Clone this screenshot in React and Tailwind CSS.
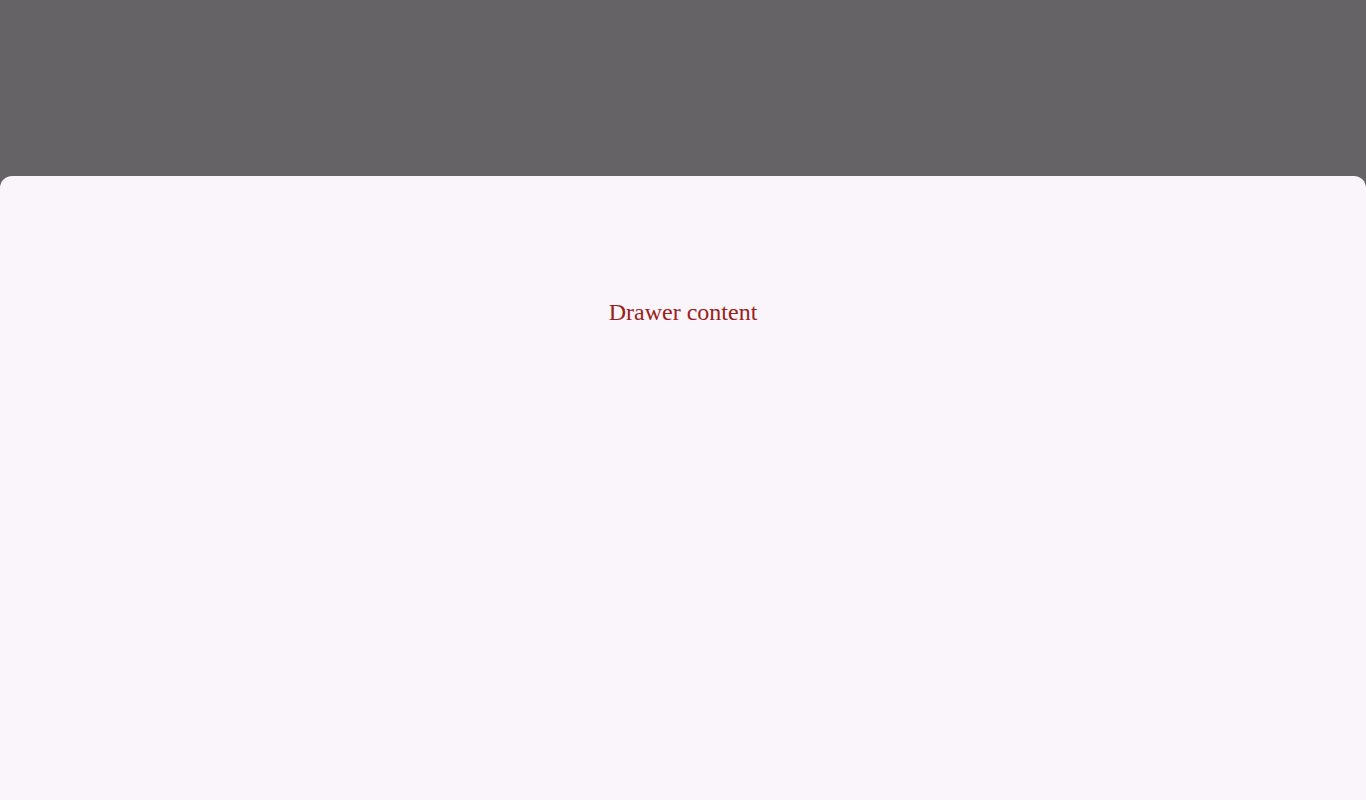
export default function App() {
  return (
    <div className="h-[800px] w-full bg-[#656366] flex flex-col justify-end overflow-hidden">
      {/* Drawer sheet */}
      <div className="h-[624px] w-full bg-[#f9f5fa] rounded-t-xl flex flex-col items-center pt-[119px]">
        <p className="font-['Liberation_Serif',serif] text-[24px] leading-[34px] text-[#99211a]">
          Drawer content
        </p>
      </div>
    </div>
  );
}
